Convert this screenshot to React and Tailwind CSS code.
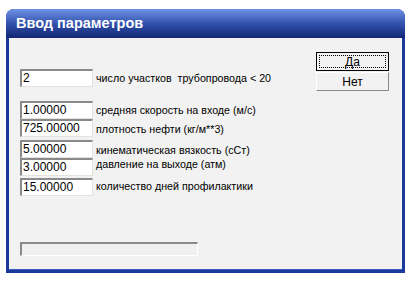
import React from "react";

const F = { fontFamily: '"Liberation Sans", Arial, sans-serif' };

function Field({ value, label, labelClass }) {
  return (
    <div className="flex items-start">
      <div className="w-[73px] h-[18px] bg-white border-t-2 border-l-2 border-t-[#8a8a8a] border-l-[#8a8a8a] border-b border-r border-b-[#e4e2dc] border-r-[#e4e2dc] pl-[1px] text-[12px] leading-[14px] text-black">
        {value}
      </div>
      <div className={"ml-[3px] text-[10.7px] leading-[13px] text-black whitespace-pre " + labelClass}>{label}</div>
    </div>
  );
}

export default function App() {
  return (
    <div className="w-[411px] h-[281px] bg-white" style={F}>
      <div className="ml-[6px] pt-[9px] w-[399px]">
        <div className="w-[399px] h-[264px] rounded-t-[8px] bg-[#1c3a9c] flex flex-col overflow-hidden">
          <div className="h-[29px] bg-gradient-to-b from-[#7093e4] via-[#3452ae] to-[#122673] flex items-center pl-[10px]">
            <span className="text-white font-bold text-[14.5px] leading-none">
              Ввод параметров
            </span>
          </div>
          <div className="flex-1 mx-[3px] mb-[3px] bg-[#f2f2f2] border-b border-b-[#3a5cc0] flex">
            <div className="pl-[11px] pt-[31px] w-[307px] flex flex-col">
              <Field value="2" label="число участков  трубопровода < 20" labelClass="mt-[3px]" />
              <div className="h-[14px]" />
              <Field value="1.00000" label="средняя скорость на входе (м/с)" labelClass="mt-[3px]" />
              <Field value="725.00000" label="плотность нефти (кг/м**3)" labelClass="mt-[4px]" />
              <div className="h-[3px]" />
              <Field value="5.00000" label="кинематическая вязкость (cСт)" labelClass="mt-[4px]" />
              <Field value="3.00000" label="давление на выходе (атм)" labelClass="mt-[0px]" />
              <div className="h-[2px]" />
              <Field value="15.00000" label="количество дней профилактики" labelClass="mt-[2px]" />
              <div className="h-[46px]" />
              <div className="w-[178px] h-[14px] border-t-2 border-l-2 border-t-[#8a8a8a] border-l-[#8a8a8a] border-b border-r border-b-white border-r-white bg-[#f0f0f0]" />
            </div>
            <div className="pt-[14px] flex flex-col">
              <div className="w-[73px] h-[19px] border border-black bg-[#f2f2f2] p-[2px]">
                <div className="w-full h-full border border-dotted border-black flex items-center justify-center text-[12px] text-black">Да</div>
              </div>
              <div className="mt-[1px] w-[73px] h-[19px] border border-t-white border-l-white border-b-[#8a8a8a] border-r-[#8a8a8a] bg-[#f2f2f2] flex items-center justify-center text-[12px] text-black">Нет</div>
            </div>
          </div>
        </div>
      </div>
    </div>
  );
}
